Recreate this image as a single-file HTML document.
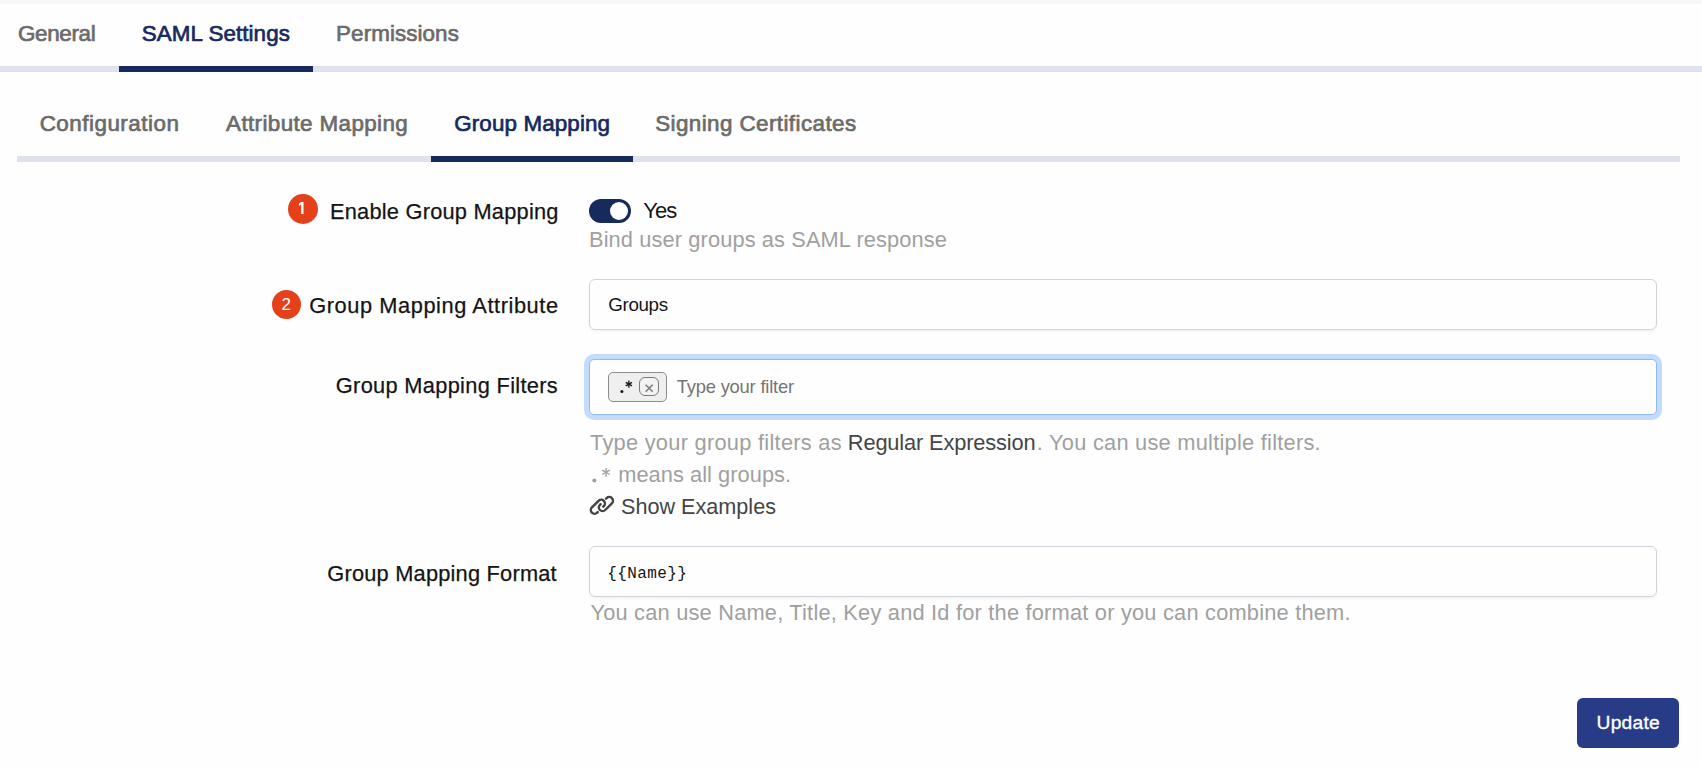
<!DOCTYPE html>
<html><head><meta charset="utf-8">
<style>
html,body{margin:0;padding:0}
body{width:1702px;height:767px;overflow:hidden;position:relative;background:#fefefe;font-family:"Liberation Sans",sans-serif}
.a{position:absolute}
.t{position:absolute;white-space:nowrap;line-height:1}
.sb{-webkit-text-stroke:0.7px currentColor}
.md{-webkit-text-stroke:0.25px currentColor}
.gray{color:#6b6b6b}
.navy{color:#172a5e}
.lbl{color:#141414}
.help{color:#a0a0a0}
.dark{color:#454545}
.inp{position:absolute;box-sizing:border-box;background:#fefefe;border:1px solid #d1d3db;border-radius:6px;box-shadow:0 2px 3px rgba(0,0,0,.045)}
.badge{position:absolute;border-radius:50%;background:#e4401a;color:#fff;text-align:center}
</style></head>
<body>
<div class="a" style="left:0;top:0;width:1702px;height:4px;background:#f7f8fa"></div>

<!-- top tabs -->
<div class="a" style="left:0;top:66px;width:1702px;height:6px;background:#dee2ea"></div>
<div class="a" style="left:119px;top:66px;width:194px;height:6px;background:#172a5e"></div>
<div id="e1" class="t sb gray" style="left:18.00px;top:23.00px;letter-spacing:-0.333px;font-size:22.4px">General</div>
<div id="e2" class="t sb navy" style="left:141.75px;top:23.00px;letter-spacing:0.070px;font-size:22.4px">SAML Settings</div>
<div id="e3" class="t sb gray" style="left:336.10px;top:23.00px;letter-spacing:0.080px;font-size:22.4px">Permissions</div>

<!-- sub tabs -->
<div class="a" style="left:17px;top:156px;width:1663px;height:6px;background:#dee2ea"></div>
<div class="a" style="left:431px;top:156px;width:202px;height:6px;background:#172a5e"></div>
<div id="e4" class="t sb gray" style="left:39.70px;top:113.00px;letter-spacing:0.500px;font-size:22.4px">Configuration</div>
<div id="e5" class="t sb gray" style="left:226.10px;top:113.00px;letter-spacing:0.385px;font-size:22.4px">Attribute Mapping</div>
<div id="e6" class="t sb navy" style="left:454.20px;top:113.00px;letter-spacing:0.126px;font-size:22.4px">Group Mapping</div>
<div id="e7" class="t sb gray" style="left:655.20px;top:113.00px;letter-spacing:0.421px;font-size:22.4px">Signing Certificates</div>

<!-- row 1 -->
<div class="badge" style="left:287.5px;top:193.5px;width:30px;height:30px"></div>
<svg class="a" style="left:290px;top:196px" width="25" height="25" viewBox="290 196 25 25"><path d="M301.2 201.9 H303.5 V214.1 H301.2 V204.6 L299 205.9 V203.6 Z" fill="#fff"/></svg>
<div id="e8" class="t md lbl" style="left:330.00px;top:200.50px;letter-spacing:0.225px;font-size:21.8px">Enable Group Mapping</div>
<div class="a" style="left:589px;top:199px;width:42px;height:24px;border-radius:12px;background:#172a5e"></div>
<div class="a" style="left:610px;top:202px;width:18px;height:18px;border-radius:50%;background:#fff"></div>
<div id="e9" class="t lbl" style="left:643.30px;top:200.40px;letter-spacing:-0.950px;font-size:22px">Yes</div>
<div id="e10" class="t help" style="left:589.00px;top:228.60px;letter-spacing:0.117px;font-size:21.8px">Bind user groups as SAML response</div>

<!-- row 2 -->
<div class="badge" style="left:272px;top:290px;width:29.2px;height:29.2px"></div>
<div id="b2" class="t" style="left:281.5px;top:296px;font-size:17px;color:#fff">2</div>
<div id="e11" class="t md lbl" style="left:309.20px;top:295.40px;letter-spacing:0.573px;font-size:21.8px">Group Mapping Attribute</div>
<div class="inp" style="left:589px;top:279px;width:1068px;height:51px"></div>
<div id="e12" class="t lbl" style="left:608.30px;top:296.40px;letter-spacing:-0.360px;font-size:18.8px">Groups</div>

<!-- row 3 -->
<div id="e13" class="t md lbl" style="left:335.80px;top:374.50px;letter-spacing:0.315px;font-size:21.8px">Group Mapping Filters</div>
<div class="a" style="left:589px;top:359px;width:1068px;height:56px;box-sizing:border-box;border:1px solid #90b9f9;border-radius:5px;background:#fefefe;box-shadow:0 0 0 5px #c4dcfb"></div>
<div class="a" style="left:608px;top:372px;width:59px;height:30px;box-sizing:border-box;border:1.5px solid #8c8c8c;border-radius:5px;background:#efefef"></div>
<div class="a" style="left:639px;top:377px;width:20px;height:19px;box-sizing:border-box;border:1.5px solid #7a7a7a;border-radius:6px;background:#f3f3f3"></div>
<svg class="a" style="left:580px;top:485px" width="44" height="40" viewBox="580 485 44 40">
<g transform="translate(601.9 505.4) rotate(-45)" fill="none" stroke="#444" stroke-width="2.45" stroke-linecap="round">
<path d="M -7.6 1.8 L -8.5 1.8 A 3.7 3.7 0 0 1 -8.5 -5.6 L 0.9 -5.6 A 3.7 3.7 0 0 1 0.9 1.8 L 0.1 1.8"/>
<path d="M 7.6 -1.8 L 8.5 -1.8 A 3.7 3.7 0 0 1 8.5 5.6 L -0.9 5.6 A 3.7 3.7 0 0 1 -0.9 -1.8 L -0.1 -1.8"/>
</g></svg>
<svg class="a" style="left:600px;top:365px" width="70" height="45" viewBox="600 365 70 45">
<circle cx="621.9" cy="391.5" r="1.55" fill="#1a1a1a"/>
<g stroke="#1a1a1a" stroke-width="1.35" stroke-linecap="butt">
<line x1="628.85" y1="380.5" x2="628.85" y2="387.8"/>
<line x1="625.7" y1="382.3" x2="632.0" y2="385.95"/>
<line x1="625.7" y1="385.95" x2="632.0" y2="382.3"/>
</g>
<g stroke="#7a7a7a" stroke-width="1.5"><line x1="645.6" y1="384.7" x2="652.7" y2="391.8"/><line x1="652.7" y1="384.7" x2="645.6" y2="391.8"/></g>
</svg>
<div id="e14" class="t" style="left:676.80px;top:378.00px;letter-spacing:-0.226px;font-size:18.4px;color:#757575">Type your filter</div>
<div id="e15" class="t help" style="left:590.00px;top:431.50px;letter-spacing:0.276px;font-size:21.8px">Type your group filters as</div>
<div id="e15b" class="t dark" style="left:847.80px;top:431.50px;letter-spacing:-0.138px;font-size:21.8px">Regular Expression</div>
<div id="e15c" class="t help" style="left:1036.80px;top:431.50px;letter-spacing:0.254px;font-size:21.8px">. You can use multiple filters.</div>
<svg class="a" style="left:586px;top:462px" width="30" height="24" viewBox="586 462 30 24">
<circle cx="594.3" cy="480.5" r="2" fill="#a0a0a0"/>
<g stroke="#a0a0a0" stroke-width="1.35">
<line x1="606" y1="467.9" x2="606" y2="476.7"/>
<line x1="602.2" y1="470.1" x2="609.8" y2="474.5"/>
<line x1="602.2" y1="474.5" x2="609.8" y2="470.1"/>
</g></svg>
<div id="e16" class="t help" style="left:618.20px;top:463.70px;letter-spacing:0.053px;font-size:21.8px">means all groups.</div>
<div id="e17" class="t dark" style="left:621.00px;top:496.40px;letter-spacing:0.015px;font-size:21.6px">Show Examples</div>

<!-- row 4 -->
<div id="e18" class="t md lbl" style="left:327.30px;top:563.00px;letter-spacing:0.211px;font-size:21.8px">Group Mapping Format</div>
<div class="inp" style="left:589px;top:546px;width:1068px;height:51px"></div>
<div id="e19" class="t lbl" style="left:607.20px;top:566.10px;letter-spacing:0.412px;font-size:16px;font-family:'Liberation Mono',monospace">{{Name}}</div>
<div id="e20" class="t help" style="left:590.40px;top:602.10px;letter-spacing:0.214px;font-size:21.8px">You can use Name, Title, Key and Id for the format or you can combine them.</div>

<!-- button -->
<div class="a" style="left:1577px;top:698px;width:102px;height:50px;border-radius:6px;background:#283b87"></div>
<div id="e21" class="t" style="left:1596.60px;top:712.80px;letter-spacing:0.240px;font-size:19.2px;color:#fff;-webkit-text-stroke:0.35px #fff">Update</div>
</body></html>
